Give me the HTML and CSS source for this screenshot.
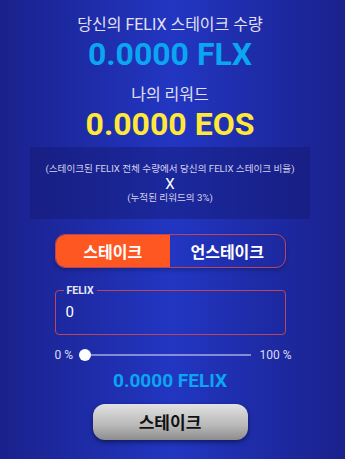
FILE: index.html
```html
<!DOCTYPE html>
<html lang="ko">
<head>
    <meta charset="UTF-8">
    <meta name="viewport" content="width=device-width, initial-scale=1.0">
    <title>FELIX 스테이크</title>
    <link rel="stylesheet" href="styles.css">
</head>
<body>
    <div class="main-content">
        <p class="label">당신의 FELIX 스테이크 수량</p>
        <p class="amount amount-blue">0.0000 FLX</p>

        <p class="label label-reward">나의 리워드</p>
        <p class="amount amount-yellow">0.0000 EOS</p>

        <div class="formula">
            <p>(스테이크된 FELIX 전체 수량에서 당신의 FELIX 스테이크 비율)</p>
            <p class="times">X</p>
            <p>(누적된 리워드의 3%)</p>
        </div>

        <div class="tabs">
            <button class="tab active">스테이크</button>
            <button class="tab">언스테이크</button>
        </div>

        <fieldset class="field">
            <legend>FELIX</legend>
            <input type="text" value="0">
        </fieldset>

        <div class="slider-row">
            <span>0 %</span>
            <div class="track"><div class="thumb"></div></div>
            <span>100 %</span>
        </div>

        <p class="felix-total">0.0000 FELIX</p>

        <button class="stake-button">스테이크</button>
    </div>
</body>
</html>
```

FILE: styles.css
```css
body {
    margin: 0;
    height: 459px;
    overflow: hidden;
    font-family: Roboto, "Noto Sans CJK KR", sans-serif;
    background: linear-gradient(90deg, #1a218c 0%, #2236c2 50%, #1a218c 100%);
    color: #e4e4f4;
}

p {
    margin: 0;
}

.main-content {
    display: flex;
    flex-direction: column;
    align-items: center;
    padding: 14px 5px 0 0;
}

.label {
    font-size: 16px;
    line-height: 22px;
    color: #e2e0f2;
}

.label-reward {
    margin-top: 12px;
}

.amount {
    font-size: 32px;
    font-weight: 700;
    line-height: 36px;
}

.amount-blue {
    color: #0aa6f2;
}

.amount-yellow {
    color: #ffe83a;
}

.formula {
    margin-top: 5px;
    width: 280px;
    padding: 15px 0 13px;
    background-color: rgba(20, 24, 110, 0.45);
    text-align: center;
    font-size: 9.6px;
    line-height: 14.5px;
    color: #d6d2ee;
}

.formula .times {
    font-size: 15px;
    line-height: 14.5px;
    color: #ffffff;
}

.tabs {
    margin-top: 15px;
    width: 231px;
    height: 34px;
    display: flex;
    border: 1px solid #b8465e;
    border-radius: 10px;
    overflow: hidden;
    box-sizing: border-box;
    box-shadow: 0 2px 4px rgba(0, 0, 0, 0.25);
}

.tab {
    flex: 1;
    border: none;
    background: transparent;
    color: #ffffff;
    font-family: "Noto Sans CJK KR", sans-serif;
    font-size: 16px;
    font-weight: 700;
    padding: 0;
}

.tab.active {
    background-color: #ff5722;
}

.field {
    margin: 17px 0 0;
    width: 231px;
    height: 50px;
    box-sizing: border-box;
    border: 1px solid #b8465e;
    border-radius: 4px;
    padding: 0 10px;
}

.field legend {
    font-size: 10.5px;
    font-weight: 700;
    color: #e8e8f4;
    padding: 0 3px;
    margin-left: -2px;
    line-height: 12px;
}

.field input {
    width: 100%;
    border: none;
    background: transparent;
    color: #ffffff;
    font-family: Roboto, sans-serif;
    font-size: 15px;
    padding: 6px 0 0;
    outline: none;
}

.slider-row {
    margin: 10px 0 0 6px;
    width: 237px;
    height: 20px;
    display: flex;
    align-items: center;
    gap: 9px;
    font-size: 12px;
    color: #dcdcf0;
}

.track {
    flex: 1;
    height: 2px;
    background-color: rgba(200, 200, 240, 0.6);
    position: relative;
}

.thumb {
    position: absolute;
    left: -3px;
    top: -5px;
    width: 12px;
    height: 12px;
    border-radius: 50%;
    background-color: #ffffff;
}

.felix-total {
    margin-top: 4px;
    font-size: 19px;
    font-weight: 700;
    line-height: 24px;
    color: #0aa6f2;
}

.stake-button {
    margin-top: 11px;
    width: 155px;
    height: 36px;
    border: none;
    border-radius: 12px;
    background: linear-gradient(180deg, #e2e2e2 0%, #b8b8b8 60%, #8c8c8c 100%);
    box-shadow: 0 2px 5px rgba(0, 0, 0, 0.5);
    color: #111111;
    font-family: "Noto Sans CJK KR", sans-serif;
    font-size: 17px;
    font-weight: 700;
}
```
